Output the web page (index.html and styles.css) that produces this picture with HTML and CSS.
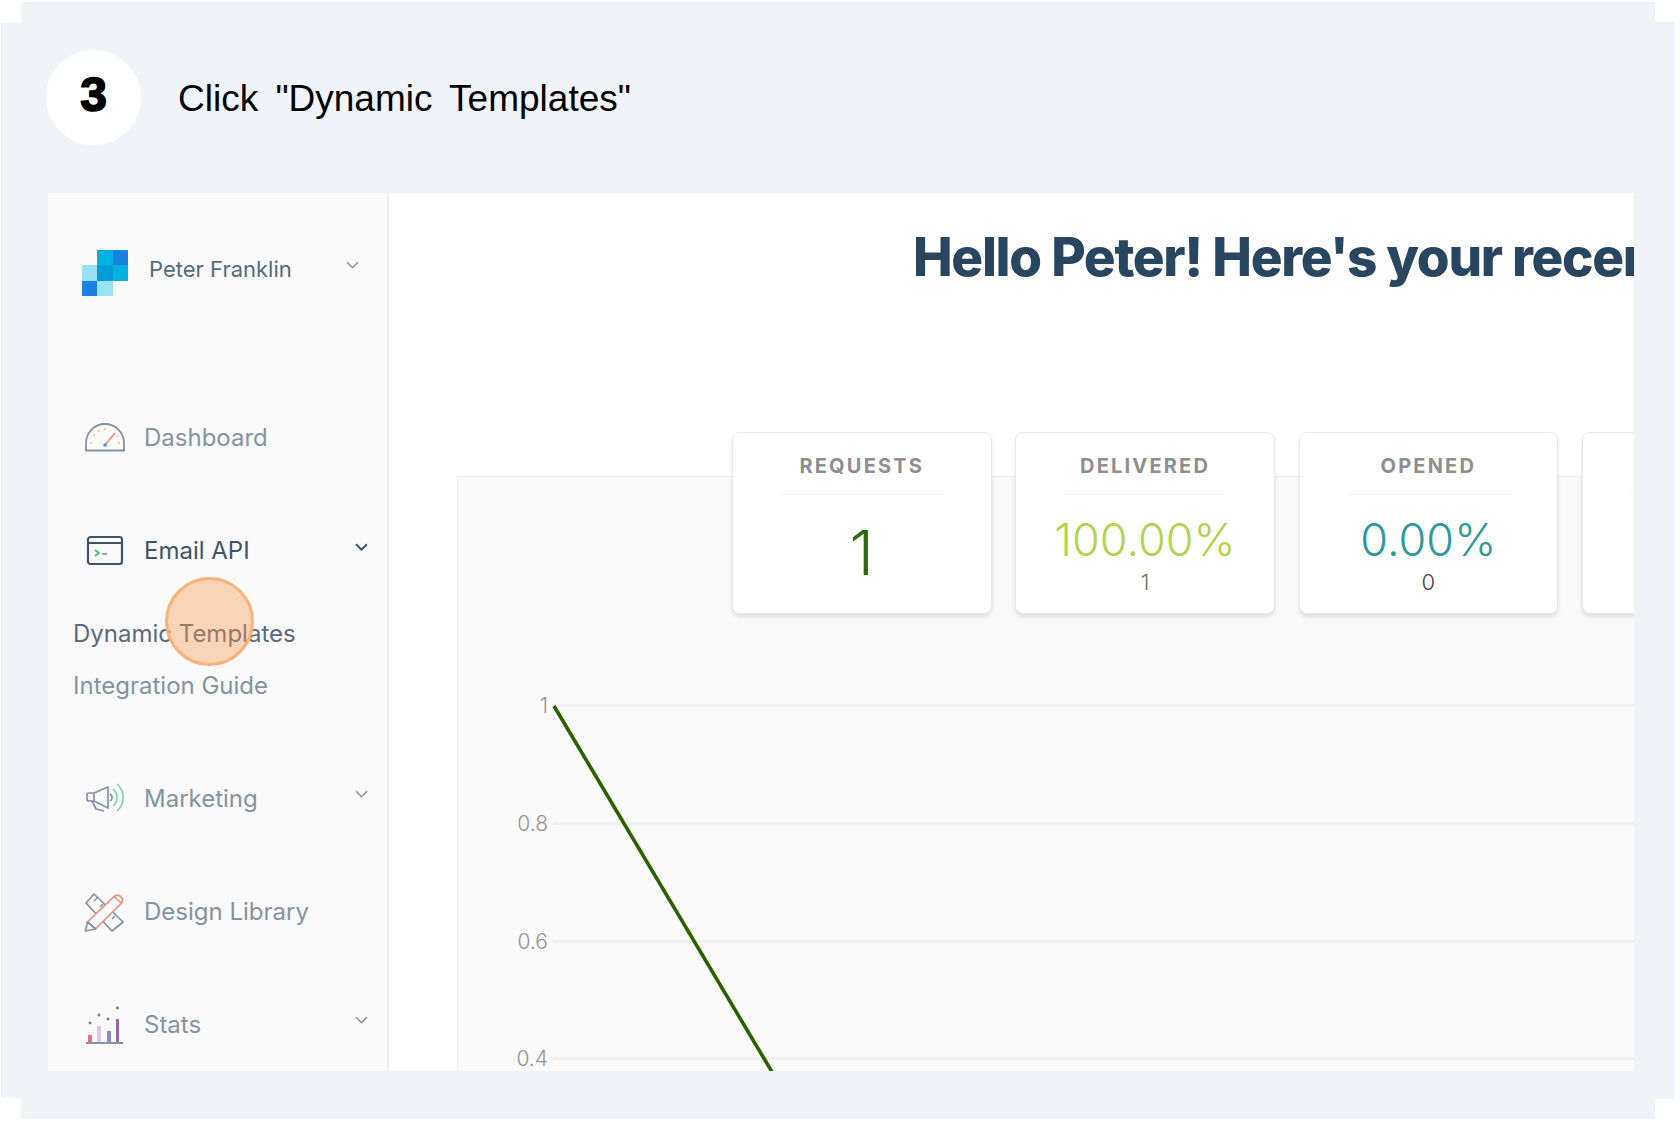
FILE: index.html
```html
<!DOCTYPE html>
<html>
<head>
    <title>Click Dynamic Templates</title>
    <link rel="stylesheet" href="styles.css">
</head>
<body>
    <div class="panel">
        <div class="step-header">
            <div class="step-number">3</div>
            <div class="step-title">Click "Dynamic Templates"</div>
        </div>

        <div class="shot">
            <div class="sidebar">
                <div class="profile">
                    <svg class="logo" viewBox="0 0 3 3" shape-rendering="crispEdges">
                        <rect x="1" y="0" width="1" height="1" fill="#00b2e3"/>
                        <rect x="2" y="0" width="1" height="1" fill="#1a82e2"/>
                        <rect x="0" y="1" width="1" height="1" fill="#99e1f4"/>
                        <rect x="1" y="1" width="1" height="1" fill="#009dd9"/>
                        <rect x="2" y="1" width="1" height="1" fill="#00b2e3"/>
                        <rect x="0" y="2" width="1" height="1" fill="#1a82e2"/>
                        <rect x="1" y="2" width="1" height="1" fill="#99e1f4"/>
                    </svg>
                    <span class="profile-name">Peter Franklin</span>
                    <svg class="chevron profile-chevron" viewBox="0 0 12 8"><path d="M1 1l5 5 5-5"/></svg>
                </div>

                <div class="nav">
                    <div class="nav-item">
                        <svg class="nav-icon" viewBox="0 0 40 40">
                            <path d="M1 33.5V26A19 19 0 0 1 39 26V33.5Z" fill="none" stroke="#8593a3" stroke-width="1.8"/>
                            <path d="M20 28L30 16" stroke="#e8917a" stroke-width="1.8"/>
                            <circle cx="20" cy="28" r="1.8" fill="#4a90d9"/>
                            <g fill="#f2c66d">
                                <circle cx="6" cy="26" r="1"/>
                                <circle cx="9" cy="18" r="1"/>
                                <circle cx="20" cy="12" r="1"/>
                                <circle cx="14" cy="14" r="1"/>
                                <circle cx="34" cy="26" r="1"/>
                                <circle cx="32" cy="19" r="1"/>
                            </g>
                        </svg>
                        <span class="nav-label">Dashboard</span>
                    </div>

                    <div class="nav-item nav-open">
                        <svg class="nav-icon" viewBox="0 0 40 40">
                            <rect x="3" y="7" width="34" height="27" rx="2.5" fill="none" stroke="#3f5468" stroke-width="2.2"/>
                            <path d="M3 13H37" stroke="#3f5468" stroke-width="2"/>
                            <path d="M10 20l4 3-4 3" fill="none" stroke="#3fbf7a" stroke-width="1.8"/>
                            <path d="M17 24h5" stroke="#8a98a8" stroke-width="1.8"/>
                        </svg>
                        <span class="nav-label nav-active">Email API</span>
                        <svg class="chevron chevron-dark" viewBox="0 0 12 8"><path d="M1 1l5 5 5-5"/></svg>
                    </div>

                    <div class="subnav">
                        <div class="subnav-item subnav-active">Dynamic Templates</div>
                        <div class="subnav-item">Integration Guide</div>
                    </div>

                    <div class="nav-item">
                        <svg class="nav-icon" viewBox="0 0 40 40">
                            <g fill="none" stroke="#8593a3" stroke-width="1.7" stroke-linejoin="round">
                                <path d="M9 15H4a2 2 0 0 0-2 2v4a2 2 0 0 0 2 2h5"/>
                                <path d="M9 15L23 9V30L9 23Z"/>
                                <path d="M7 23l4 8 8 2"/>
                            </g>
                            <path d="M25 16a4 4 0 0 1 0 7" fill="none" stroke="#5a9bd5" stroke-width="1.6"/>
                            <path d="M28 11a11 11 0 0 1 0 17" fill="none" stroke="#7fd1ae" stroke-width="1.6"/>
                            <path d="M32 6a18 18 0 0 1 0 27" fill="none" stroke="#7fd1ae" stroke-width="1.6"/>
                        </svg>
                        <span class="nav-label">Marketing</span>
                        <svg class="chevron" viewBox="0 0 12 8"><path d="M1 1l5 5 5-5"/></svg>
                    </div>

                    <div class="nav-item">
                        <svg class="nav-icon" viewBox="0 0 40 40">
                            <path d="M9 3L1 12L27 40L38 31Z" fill="none" stroke="#8593a3" stroke-width="1.7" stroke-linejoin="round"/>
                            <path d="M9 10l4-4M15 16l3-3M27 28l3-3" stroke="#8593a3" stroke-width="1.5"/>
                            <path d="M2.5 31L29 5.5Q33 2.5 36 6Q39 9 36.5 12L10.5 38Z" fill="#fafafa" stroke="#e8917a" stroke-width="1.7" stroke-linejoin="round"/>
                            <path d="M2.5 31L0.5 40L10.5 38Z" fill="#fafafa" stroke="#8593a3" stroke-width="1.7" stroke-linejoin="round"/>
                            <path d="M29 5.5L36.5 12" stroke="#e8917a" stroke-width="1.5"/>
                        </svg>
                        <span class="nav-label">Design Library</span>
                    </div>

                    <div class="nav-item">
                        <svg class="nav-icon" viewBox="0 0 40 40">
                            <rect x="3" y="31" width="4" height="8" fill="#e86a8e"/>
                            <rect x="12" y="22" width="4" height="17" fill="#dcc8ee"/>
                            <rect x="22" y="27" width="4" height="12" fill="#8f86e0"/>
                            <rect x="31" y="15" width="3" height="24" fill="#9a62b0"/>
                            <path d="M1 39H38" stroke="#8593a3" stroke-width="2"/>
                            <g fill="#6f7d8c">
                                <circle cx="5" cy="19" r="1.4"/>
                                <circle cx="14" cy="11" r="1.4"/>
                                <circle cx="23" cy="15" r="1.4"/>
                                <circle cx="32.5" cy="4" r="1.4"/>
                            </g>
                        </svg>
                        <span class="nav-label">Stats</span>
                        <svg class="chevron" viewBox="0 0 12 8"><path d="M1 1l5 5 5-5"/></svg>
                    </div>
                </div>

                <div class="click-marker"></div>
            </div>

            <div class="main">
                <h1 class="greeting">Hello Peter! Here's your recent</h1>

                <div class="cards">
                    <div class="card">
                        <div class="card-label">REQUESTS</div>
                        <div class="card-total">1</div>
                    </div>
                    <div class="card">
                        <div class="card-label">DELIVERED</div>
                        <div class="card-value value-lime">100.00%</div>
                        <div class="card-count">1</div>
                    </div>
                    <div class="card">
                        <div class="card-label">OPENED</div>
                        <div class="card-value value-teal">0.00%</div>
                        <div class="card-count count-dark">0</div>
                    </div>
                    <div class="card">
                        <div class="card-label">&nbsp;</div>
                    </div>
                </div>

                <div class="chart">
                    <div class="chart-row"><span class="tick">1</span><span class="gridline"></span></div>
                    <div class="chart-row"><span class="tick">0.8</span><span class="gridline"></span></div>
                    <div class="chart-row"><span class="tick">0.6</span><span class="gridline"></span></div>
                    <div class="chart-row"><span class="tick">0.4</span><span class="gridline"></span></div>
                    <svg class="chart-line" viewBox="0 0 400 640">
                        <path d="M96 229L326 615" stroke="#2a6000" stroke-width="3.6" fill="none"/>
                    </svg>
                </div>
            </div>
        </div>
    </div>
</body>
</html>
```

FILE: styles.css
```css
body {
    margin: 0;
    background-color: white;
    font-family: Inter, "Liberation Sans", sans-serif;
}
.panel {
    width: 1674px;
    height: 1117px;
    margin: 2px 0 0 1px;
    background-color: #f0f3f8;
    /* notched corners */
    clip-path: polygon(20px 0, 1654px 0, 1654px 20px, 1674px 20px, 1674px 1097px, 1654px 1097px, 1654px 1117px, 20px 1117px, 20px 1096px, 0 1096px, 0 21px, 20px 21px);
}
.step-header {
    display: flex;
    align-items: center;
    height: 191px;
    padding-left: 45px;
    box-sizing: border-box;
}
.step-number {
    width: 95px;
    height: 95px;
    border-radius: 50%;
    background-color: white;
    display: flex;
    align-items: center;
    justify-content: center;
    font-family: "Liberation Sans", sans-serif;
    font-size: 48px;
    font-weight: bold;
    -webkit-text-stroke: 1.6px black;
    color: black;
    padding-bottom: 6px;
    box-sizing: border-box;
}
.step-title {
    margin-left: 37px;
    padding-top: 3px;
    font-family: "Liberation Sans", sans-serif;
    font-size: 37px;
    word-spacing: 7px;
    color: black;
}
.shot {
    display: flex;
    width: 1586px;
    height: 878px;
    margin-left: 47px;
    overflow: hidden;
    background-color: white;
}

/* sidebar */
.sidebar {
    position: relative;
    width: 339px;
    flex-shrink: 0;
    background-color: #fafafa;
    border-right: 2px solid #eeeeee;
}
.profile {
    display: flex;
    align-items: center;
    height: 46px;
    margin: 57px 0 0 34px;
}
.logo {
    width: 46px;
    height: 46px;
}
.profile-name {
    margin-left: 21px;
    padding-bottom: 8px;
    font-size: 22px;
    color: #546b81;
}
.profile-chevron {
    position: absolute;
    left: 298px;
    top: 68px;
}
.nav {
    margin-top: 121px;
}
.nav-item {
    position: relative;
    display: flex;
    align-items: center;
    height: 40px;
    margin-bottom: 73px;
    padding-left: 37px;
}
.nav-open {
    margin-bottom: 38px;
}
.nav-icon {
    width: 40px;
    height: 40px;
    overflow: visible;
}
.nav-label {
    margin-left: 19px;
    font-size: 24px;
    color: #8593a3;
}
.nav-active {
    color: #3f5468;
}
.chevron {
    width: 13px;
    height: 9px;
    fill: none;
    stroke: #8593a3;
    stroke-width: 1.4;
}
.nav-item .chevron {
    position: absolute;
    left: 307px;
    top: 12px;
}
.nav-item .chevron-dark {
    top: 13px;
    stroke: #3f5468;
    stroke-width: 1.8;
}
.subnav {
    margin-bottom: 66px;
    padding-left: 25px;
}
.subnav-item {
    height: 52px;
    line-height: 52px;
    font-size: 24px;
    color: #8593a3;
}
.subnav-active {
    color: #5b6b7c;
}
.click-marker {
    position: absolute;
    left: 117px;
    top: 384px;
    width: 89px;
    height: 89px;
    box-sizing: border-box;
    border-radius: 50%;
    border: 3px solid #f8b27a;
    background-color: rgba(250, 150, 70, 0.38);
}

/* main area */
.main {
    position: relative;
    flex: 1;
    min-width: 0;
    overflow: hidden;
}
.greeting {
    margin: 0;
    height: 239px;
    padding: 28px 0 0 524px;
    box-sizing: border-box;
    font-size: 53px;
    line-height: 72px;
    font-weight: 800;
    letter-spacing: -1.3px;
    white-space: nowrap;
    color: #294661;
}
.cards {
    position: relative;
    z-index: 1;
    display: flex;
    gap: 23.8px;
    height: 182px;
    margin-left: 343px;
}
.card {
    width: 259.5px;
    height: 182px;
    flex-shrink: 0;
    box-sizing: border-box;
    background-color: white;
    border: 1px solid #e8e8e8;
    border-radius: 8px;
    box-shadow: 0 3px 4px rgba(0, 0, 0, 0.1);
    text-align: center;
}
.card-label {
    margin: 0 47px;
    height: 62px;
    line-height: 67px;
    box-sizing: border-box;
    border-bottom: 1px solid #f4f4f4;
    font-size: 20px;
    font-weight: 700;
    letter-spacing: 2.2px;
    color: #8f8f8f;
}
.card-total {
    margin-top: 22px;
    font-size: 62px;
    line-height: 72px;
    font-weight: 300;
    color: #2b6a0e;
}
.card-value {
    margin-top: 18px;
    font-size: 45px;
    line-height: 54px;
    font-weight: 300;
}
.value-lime {
    color: #b5d34e;
}
.value-teal {
    color: #2f9a9c;
}
.card-count {
    font-size: 22px;
    line-height: 30px;
    font-weight: 300;
    color: #6e7a5e;
}
.count-dark {
    color: #444444;
}

/* chart */
.chart {
    position: relative;
    margin: -138px 0 0 68px;
    padding-top: 170px;
    height: 640px;
    box-sizing: border-box;
    background-color: #fafafa;
    border: 1px solid #eeeeee;
    border-right: none;
}
.chart-row {
    display: flex;
    align-items: center;
    gap: 5px;
    height: 117.67px;
}
.tick {
    width: 90px;
    flex-shrink: 0;
    text-align: right;
    font-size: 21px;
    font-weight: 300;
    color: #949494;
}
.gridline {
    flex: 1;
    height: 3px;
    background-color: #f1f1f1;
}
.chart-line {
    position: absolute;
    left: 0;
    top: 0;
    width: 400px;
    height: 640px;
}
```
